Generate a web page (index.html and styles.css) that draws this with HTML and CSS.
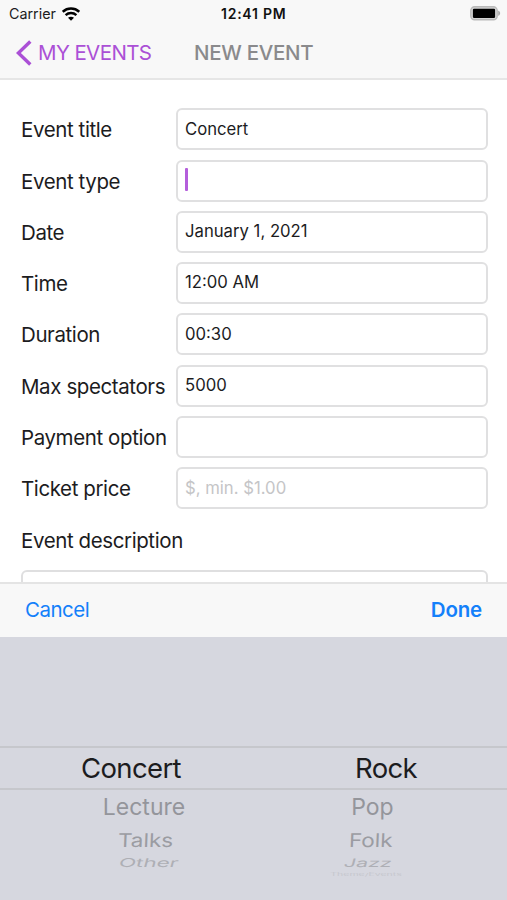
FILE: index.html
```html
<!DOCTYPE html>
<html lang="en">
<head>
<meta charset="utf-8">
<title>New Event</title>
<link rel="stylesheet" href="styles.css">
</head>
<body>
<div class="screen">
  <header class="top">
    <div class="status">
      <span class="carrier">Carrier</span>
      <svg class="wifi" width="18" height="14" viewBox="0 0 18 14"><path d="M.7 4.8C5.4.4 12.6.4 17.3 4.8" fill="none" stroke="#000" stroke-width="2.6"/><path d="M3.6 8.1c3.1-2.8 7.7-2.8 10.8 0" fill="none" stroke="#000" stroke-width="2.4"/><path d="M6 10.8c1.7-1.5 4.3-1.5 6 0L9 13.8z"/></svg>
      <span class="clock">12:41 PM</span>
      <svg class="battery" width="31" height="15" viewBox="0 0 31 15"><rect x=".8" y=".8" width="26.4" height="13" rx="3.8" fill="#d4d4d4" stroke="#b9b9b9" stroke-width="1.4"/><rect x="2.9" y="2.7" width="22.2" height="9.2" rx="1.2"/><path d="M28.2 4.8c2.6.6 2.6 4.4 0 5z" fill="#a8a8a8"/></svg>
    </div>
    <nav class="nav">
      <svg class="back" width="16" height="26" viewBox="0 0 16 26"><path d="M14.3 1.5 2.4 13l11.9 11.5" fill="none" stroke="#ab50d6" stroke-width="3.4"/></svg>
      <span class="parent">MY EVENTS</span>
      <h1 class="title">NEW EVENT</h1>
    </nav>
  </header>
  <main class="form">
    <div class="row"><label class="label">Event title</label><div class="field"><span>Concert</span></div></div>
    <div class="row"><label class="label">Event type</label><div class="field"><i class="caret"></i></div></div>
    <div class="row"><label class="label">Date</label><div class="field"><span>January 1, 2021</span></div></div>
    <div class="row"><label class="label">Time</label><div class="field"><span>12:00 AM</span></div></div>
    <div class="row"><label class="label">Duration</label><div class="field"><span>00:30</span></div></div>
    <div class="row"><label class="label">Max spectators</label><div class="field"><span>5000</span></div></div>
    <div class="row"><label class="label">Payment option</label><div class="field"></div></div>
    <div class="row"><label class="label">Ticket price</label><div class="field hint"><span>$, min. $1.00</span></div></div>
    <div class="row"><label class="label">Event description</label></div>
    <div class="area"></div>
  </main>
  <div class="bar"><span class="cancel">Cancel</span><span class="done">Done</span></div>
  <section class="picker">
    <div class="band"><span class="cell">Concert</span><span class="cell">Rock</span></div>
    <div class="wheel w2"><span class="cell">Lecture</span><span class="cell">Pop</span></div>
    <div class="wheel w3"><span class="cell">Talks</span><span class="cell">Folk</span></div>
    <div class="wheel w4"><span class="cell">Other</span><span class="cell">Jazz</span></div>
    <div class="wheel w5"><span></span><span class="cell">Theme/Events</span></div>
  </section>
</div>
</body>
</html>
```
FILE: styles.css
```css
* { box-sizing: border-box; }
body { margin: 0; font-family: Inter, "Liberation Sans", sans-serif; color: #1c1c1e; background: #fff; }
.screen { width: 507px; height: 900px; overflow: hidden; display: flex; flex-direction: column; }
.top { flex: none; height: 80px; background: #f8f8f8; border-bottom: 2px solid #e6e6e6; }
.status { height: 27px; display: grid; grid-template-columns: 53px 159px 1fr 37px; align-items: center; padding-left: 9px; white-space: nowrap; }
.carrier { font-size: 14.3px; }
.clock { font-size: 14px; font-weight: 600; letter-spacing: .75px; color: #111; }
.nav { height: 51px; display: flex; align-items: center; padding-left: 16px; white-space: nowrap; }
.back { margin-right: 6px; flex: none; }
.parent { width: 156px; font-size: 20.5px; letter-spacing: -.6px; color: #ab50d6; }
.title { margin: 0; font-size: 20.5px; letter-spacing: -.3px; font-weight: 550; color: #8a8a8c; }
.form { flex: none; height: 501.5px; overflow: hidden; padding: 28.3px 19px 0 21px; }
.row { height: 51.3px; display: grid; grid-template-columns: 155px 312px; align-items: start; }
.label { font-size: 20.5px; letter-spacing: -.4px; line-height: 43.5px; white-space: nowrap; }
.field { height: 42px; border: 2px solid #e0e0e1; border-radius: 6px; padding: 0 0 1.5px 7px; display: flex; align-items: center; font-size: 16.7px; line-height: 34px; }
.hint { color: #c5c5c7; }
.caret { width: 3px; height: 23px; background: #b45edb; border-radius: 1px; }
.area { height: 60px; border: 2px solid #dfdfe0; border-radius: 6px; }
.bar { flex: none; height: 55px; background: #f8f8f8; border-top: 2px solid #e4e4e4; display: flex; justify-content: space-between; align-items: center; padding: 0 25px 1px; color: #1480fa; font-size: 20.5px; letter-spacing: -.5px; }
.done { font-weight: 600; letter-spacing: -.2px; }
.picker { flex: 1; background: #d6d7df; padding-top: 109.5px; white-space: nowrap; }
.band { height: 44px; border: 2px solid #c6c7cc; border-width: 2px 0; display: grid; grid-template-columns: 262px 248px; align-items: center; font-size: 27.5px; letter-spacing: -.65px; }
.wheel { display: grid; align-items: center; }
.cell { justify-self: center; }
.w2 { height: 34px; grid-template-columns: 288px 169px; font-size: 23px; color: #94959b; }
.w3 { height: 31px; grid-template-columns: 292px 157px; font-size: 22.5px; color: #9b9ca2; }
.w3 .cell { transform: scaleY(.84) skewX(-2deg); }
.w4 { height: 16px; grid-template-columns: 298px 140px; font-size: 22.5px; line-height: 16px; color: #aeafb5; }
.w4 .cell { transform: scaleY(.54) skewX(-8deg); }
.w4 .cell:last-child { font-size: 21.5px; }
.w5 { height: 7px; grid-template-columns: 300px 132px; font-size: 10.5px; line-height: 7px; color: #c6c7ce; }
.w5 .cell { transform: scaleY(.4); }
```
